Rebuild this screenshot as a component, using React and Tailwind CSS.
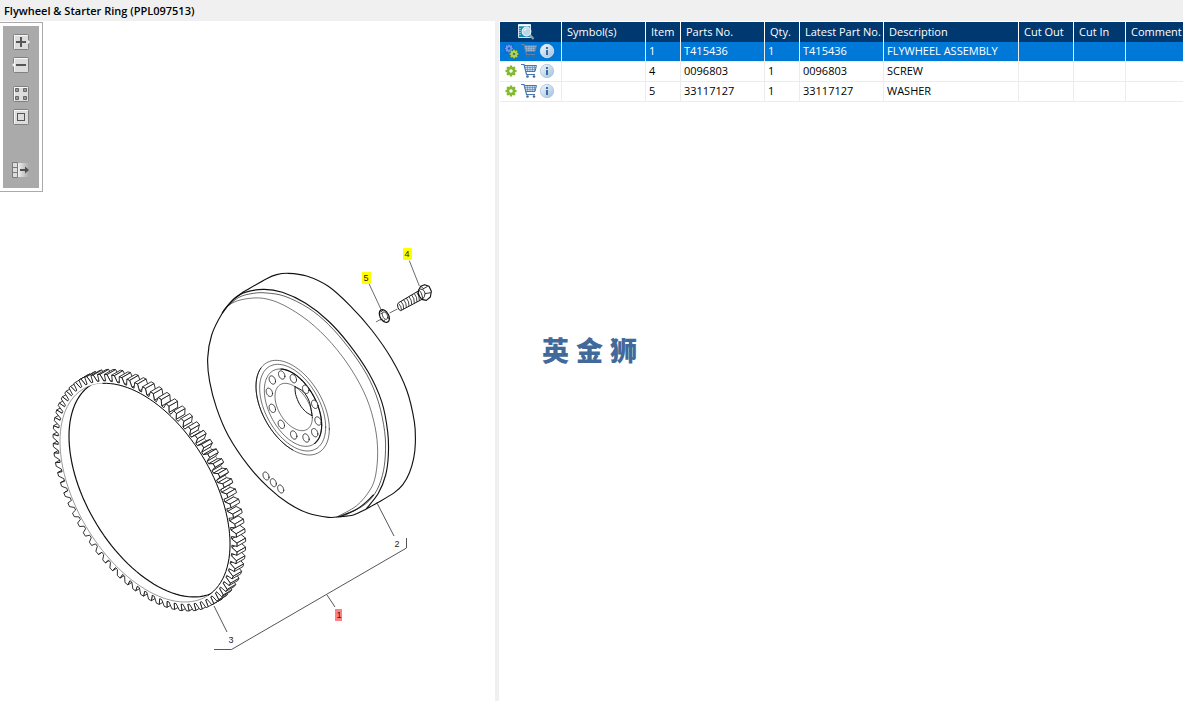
import React from "react";

/* ---------- geometry helpers for the exploded drawing ---------- */

// Point on a sheared ellipse: half extents a and b, skew k.
const pt = (cx, cy, a, b, k, t) => [cx + a * Math.cos(t), cy + b * Math.sin(t + Math.asin(k))];

const poly = (points, close = true) =>
  "M" + points.map((p) => p[0].toFixed(1) + " " + p[1].toFixed(1)).join("L") + (close ? "Z" : "");

const oval = (cx, cy, a, b, k = 0.45, from = 0, to = 360) => {
  const pts = [];
  for (let d = from; d <= to; d += 3) pts.push(pt(cx, cy, a, b, k, (d * Math.PI) / 180));
  return poly(pts, to - from >= 360);
};

// Catmull-Rom curve through a flat list of coordinates.
const curve = (...n) => {
  const p = [];
  for (let i = 0; i < n.length; i += 2) p.push([n[i], n[i + 1]]);
  let d = `M${p[0][0]} ${p[0][1]}`;
  for (let i = 0; i < p.length - 1; i++) {
    const a = p[i - 1] || p[i];
    const b = p[i];
    const c = p[i + 1];
    const e = p[i + 2] || c;
    d += `C${b[0] + (c[0] - a[0]) / 6} ${b[1] + (c[1] - a[1]) / 6} ${c[0] - (e[0] - b[0]) / 6} ${c[1] - (e[1] - b[1]) / 6} ${c[0]} ${c[1]}`;
  }
  return d;
};

const GEAR = { cx: 315, cy: 398, a: 255, b: 328, k: 0.47 };
const DEPTH = [26, -15];
const TEETH = 73;

const gearPoint = (scale, t) => pt(GEAR.cx, GEAR.cy, GEAR.a * scale, GEAR.b * scale, GEAR.k, t);

function buildGear() {
  const outline = [];
  const step = (Math.PI * 2) / TEETH;
  for (let i = 0; i < TEETH; i++) {
    const t = i * step;
    outline.push(gearPoint(1.022, t), gearPoint(1.022, t + step * 0.28));
    outline.push(gearPoint(1.082, t + step * 0.44), gearPoint(1.082, t + step * 0.8));
  }
  const sides = outline
    .map((p, i) => {
      const q = outline[(i + 1) % outline.length];
      const facing = (q[1] - p[1]) * DEPTH[0] - (q[0] - p[0]) * DEPTH[1];
      const order = (p[0] + q[0]) * DEPTH[0] + (p[1] + q[1]) * DEPTH[1];
      return {
        facing,
        order,
        root: i % 4 === 0,
        d: poly([p, q, [q[0] + DEPTH[0], q[1] + DEPTH[1]], [p[0] + DEPTH[0], p[1] + DEPTH[1]]]),
      };
    })
    .filter((s) => s.facing > 0)
    .sort((m, n) => m.order - n.order);
  return { outline: poly(outline), sides };
}

const gear = buildGear();

const BOLT_HOLES = [
  [232, 435], [260, 420], [295, 431], [332, 463], [359, 508], [369, 558],
  [359, 593], [333, 609], [296, 600], [259, 568], [232, 520], [223, 472],
];

function StarterRing() {
  return (
    <g transform="translate(40 360) scale(.33333)" fill="#fff" stroke="#111" strokeWidth="2.6" strokeLinejoin="round">
      {gear.sides.map((s, i) => (
        <path key={i} d={s.d} stroke={s.root ? "#777" : "#1a1a1a"} />
      ))}
      <path d={gear.outline} />
      <path d={oval(315, 398, 255, 328, 0.47)} stroke="#666" strokeWidth="2" />
      <clipPath id="ring-hole">
        <path d={oval(315, 398, 255, 328, 0.47)} />
      </clipPath>
      <path d={oval(342, 383, 255, 328, 0.47)} clipPath="url(#ring-hole)" strokeWidth="3.6" />
      <path d={oval(315, 398, 255, 328, 0.47, -120, 42)} fill="none" strokeWidth="3" />
    </g>
  );
}

function Flywheel() {
  return (
    <g transform="translate(195 235) scale(.33333)" fill="none" stroke="#111" strokeWidth="3.4" strokeLinecap="round">
      <path d={curve(145, 171, 215, 131, 245, 119, 280, 115, 335, 123, 400, 154, 465, 212, 530, 285, 590, 372, 635, 465, 658, 560, 661, 625, 656, 670, 643, 714, 624, 748, 598, 773, 545, 805)} />
      <path d={curve(145, 171, 112, 196, 80, 238, 50, 300, 38, 370, 44, 440, 65, 520, 100, 602, 160, 692, 220, 757, 280, 805, 340, 835, 400, 847, 435, 845, 475, 840, 510, 824, 545, 805)} />
      <path d={curve(82, 233, 108, 201, 145, 174, 205, 163, 262, 172, 332, 205, 400, 258, 460, 325, 520, 412, 560, 500, 578, 590, 580, 660, 572, 720, 550, 775, 515, 820)} />
      <path strokeWidth="2" d={curve(85, 226, 130, 188, 175, 175, 215, 174, 270, 184, 340, 219, 400, 268, 460, 337, 515, 418, 550, 500, 569, 590, 571, 660, 562, 722, 540, 775, 500, 815, 430, 845)} />
      <path strokeWidth="1.7" d={curve(85, 228, 110, 205, 150, 192, 205, 190, 265, 210, 340, 258, 410, 325, 470, 405, 515, 490, 540, 575, 548, 650, 542, 720, 525, 765, 485, 812, 425, 846)} />
      <path d={curve(435, 845, 480, 826, 515, 800, 535, 780)} />
      <g strokeWidth="1.8">
        <path d={oval(293, 518, 110, 142)} />
        <path d={oval(293, 518, 99, 130)} />
        <path d={oval(294, 518, 86, 116)} />
        <path d={oval(296, 516, 56, 71)} />
      </g>
      <path strokeWidth="2.6" d={oval(293, 518, 110, 142, 0.45, 90, 210)} />
      <path strokeWidth="3.4" d={oval(294, 518, 86, 116, 0.45, -115, 42)} />
      <path strokeWidth="3" d={curve(300, 455, 302, 478, 314, 508, 332, 530, 351, 542)} />
      <path strokeWidth="3" d={curve(300, 455, 325, 470, 343, 500, 351, 542)} />
      <g fill="#fff" strokeWidth="2.6">
        {BOLT_HOLES.map(([x, y]) => (
          <path key={x + "-" + y} d={oval(x, y, 9.5, 12.5, 0.3)} />
        ))}
        <path d={oval(213, 723, 9, 12, 0.3)} />
        <path d={oval(235, 743, 9, 12, 0.3)} />
        <path d={oval(257, 762, 9, 12, 0.3)} />
      </g>
    </g>
  );
}

function ScrewAndWasher() {
  return (
    <g transform="translate(350 240) scale(.33333)" fill="none" stroke="#111" strokeWidth="3" strokeLinejoin="round">
      <path strokeWidth="2.4" stroke="#444" d="M178 62 208 138M57 131 93 208M78 246 92 238M119 219 142 207" />
      <path d="M146 188 205 153M152 212 214 179M146 188Q140 192 144 203Q148 212 152 212" />
      <path strokeWidth="2.4" d="M153 184Q162 194 161 207M161 179Q170 189 169 203M169 174Q178 184 177 198M177 170Q186 180 185 194M185 165Q194 175 193 190M193 161Q202 171 201 186M200 157Q209 167 208 182M147 192Q155 200 154 210" />
      <path fill="#fff" strokeWidth="3.4" d="M206 150 212 139 224 134 237 139 244 154 241 171 229 181 215 178 209 170Q202 160 206 150Z" />
      <path strokeWidth="2.6" d="M210 147Q224 148 225 161Q225 171 217 178M225 161 242 158M219 147 233 139M206 150Q216 156 218 177M213 139 221 147" />
      <path strokeWidth="3.600" d={oval(103, 228, 15, 19, 0.4)} />
      <path strokeWidth="2.800" d={oval(105, 227, 8, 11, 0.4)} />
      <path strokeWidth="3" d="M91 216 99 211M91 223 96 218M97 237 91 240M103 239 101 246M112 232 119 236" />
    </g>
  );
}

const CALLOUTS = [
  { n: 4, x: 407, y: 254, fill: "#ffff00" },
  { n: 5, x: 366, y: 278, fill: "#ffff00" },
  { n: 1, x: 339, y: 615, fill: "#ff8080" },
  { n: 2, x: 397, y: 544 },
  { n: 3, x: 231, y: 640 },
];

function Diagram() {
  return (
    <svg className="block shrink-0" width="495" height="680" viewBox="0 21 495 680" role="img" aria-label="Flywheel and starter ring exploded view">
      <Flywheel />
      <StarterRing />
      <ScrewAndWasher />
      <path d="M377 503 394 536M214 606 227 632M214 649.500H231.500L406.500 548V538M327 595 335 607" fill="none" stroke="#555" strokeWidth="1" />
      {CALLOUTS.map((c) => (
        <g key={c.n}>
          {c.fill && <rect x={c.x - 4} y={c.y - 6} width={c.n === 1 ? 7 : 9} height="12" fill={c.fill} />}
          <text x={c.x} y={c.y + 3} textAnchor="middle" fill="#222" className="font-['Liberation_Sans',sans-serif] text-[9px]">
            {c.n}
          </text>
        </g>
      ))}
    </svg>
  );
}

/* ---------- toolbar ---------- */

const Tile = () => (
  <>
    <rect x=".5" y=".5" width="15" height="15" rx="1" fill="#dcdcdc" stroke="#808080" />
    <path d="M1.500 14.500V1.500H14.500" fill="none" stroke="#f8f8f8" />
  </>
);

const TOOLS = [
  {
    label: "Zoom in",
    art: (
      <>
        <Tile />
        <path d="M15 6 17 8 15 10Z" fill="#eee" />
        <path d="M3 8H13M8 3V13" stroke="#555" strokeWidth="2" />
      </>
    ),
  },
  {
    label: "Zoom out",
    art: (
      <>
        <Tile />
        <path d="M1 6-1 8 1 10Z" fill="#eee" />
        <path d="M3 8H13" stroke="#555" strokeWidth="2" />
      </>
    ),
  },
  {
    label: "Fit to window",
    gap: true,
    art: (
      <>
        <Tile />
        <path d="M2.500 2.500h3v3h-3zM10.500 2.500h3v3h-3zM2.500 10.500h3v3h-3zM10.500 10.500h3v3h-3z" fill="#999" stroke="#666" />
      </>
    ),
  },
  {
    label: "Actual size",
    art: (
      <>
        <Tile />
        <rect x="4.500" y="4.500" width="7" height="7" fill="#ddd" stroke="#555" />
      </>
    ),
  },
];

function Toolbar() {
  return (
    <div role="toolbar" aria-label="Drawing tools" className="absolute top-px left-0 border border-l-0 border-[#aaa] bg-white p-[3px]">
      <div className="flex w-9 flex-col items-center bg-[#aaa] pt-2 pb-2.5">
        {TOOLS.map((t) => (
          <button key={t.label} aria-label={t.label} className={t.gap ? "mt-[13px] size-4" : "mt-[7px] size-4 first:mt-0"}>
            <svg viewBox="0 0 16 16" className="block size-4 overflow-visible">
              {t.art}
            </svg>
          </button>
        ))}
        <button aria-label="Hide parts list" className="mt-[37px] size-4">
          <svg viewBox="0 0 16 16" className="block size-4 overflow-visible">
            <defs>
              <linearGradient id="fade">
                <stop offset="0" stopColor="#eee" />
                <stop offset="1" stopColor="#aaa" />
              </linearGradient>
            </defs>
            <rect x="5" y="1" width="11" height="14" fill="url(#fade)" />
            <path d="M-.5.500h5v15h-5zM-.5 5.500h5M-.5 10.500h5" fill="#ddd" stroke="#7a7a7a" />
            <path d="M5.500 1V15" stroke="#eee" />
            <path d="M7 7H12V4.500L16 8 12 11.500V9H7Z" fill="#505050" />
          </svg>
        </button>
      </div>
    </div>
  );
}

/* ---------- table icons ---------- */

const Teeth = ({ cx, cy, r, w, color, hole }) => (
  <g transform={`translate(${cx} ${cy})`}>
    {[0, 45, 90, 135].map((a) => (
      <rect key={a} x={-w / 2} y={-r} width={w} height={r * 2} transform={`rotate(${a})`} fill={color} />
    ))}
    <circle r={r * 0.76} fill={color} />
    <circle r={r * 0.32} fill={hole} />
  </g>
);

const GearIcon = () => (
  <svg viewBox="0 0 16 16" className="block size-4">
    <Teeth cx={8} cy={8} r={5.5} w={2.4} color="#84b92f" hole="#fff" />
  </svg>
);

const AssemblyIcon = () => (
  <svg viewBox="0 0 16 16" className="block size-4">
    <Teeth cx={6} cy={5.5} r={4.9} w={2.2} color="#1f4fb8" hole="#0078d7" />
    <Teeth cx={6} cy={5.5} r={4.1} w={1.5} color="#6f9cf0" hole="#0a5fc0" />
    <Teeth cx={11} cy={11} r={4.9} w={2.2} color="#5d8f2e" hole="#0078d7" />
    <Teeth cx={11} cy={11} r={4.1} w={1.6} color="#b2d84e" hole="#4c7f7a" />
  </svg>
);

const CartIcon = ({ active }) => (
  <svg viewBox="0 0 16 16" className="block size-4" fill="none" stroke={active ? "#6580a5" : "#4878ad"}>
    <path d="M3 2H15.500L14 8 4.500 9Z" fill={active ? "#9db7d3" : "#c9dcee"} stroke="none" />
    <path d="M0 1.500H3L5.500 11.500H14" strokeWidth="1.200" />
    <path d="M3.500 2.500H15.500L14 8.500H5" />
    <path d="M4 4.500H15M4.500 6.500H14.500M6.500 2.500V8.500M9 2.500V8.500M11.500 2.500V8.500M13.500 2.500V8" strokeWidth=".5" />
    <circle cx="6.500" cy="13.500" r="1.300" fill="#456a98" stroke="none" />
    <circle cx="13" cy="13.500" r="1.300" fill="#456a98" stroke="none" />
  </svg>
);

const InfoIcon = ({ active }) => (
  <svg viewBox="0 0 16 16" className="block size-4">
    <defs>
      <linearGradient id="orb" x2="1" y2="1">
        <stop offset="0" stopColor="#f4f8fb" />
        <stop offset="1" stopColor="#9fc0df" />
      </linearGradient>
    </defs>
    <circle cx="8" cy="8" r="6.700" fill="url(#orb)" stroke={active ? "#dceaf6" : "#a6c3de"} strokeWidth=".8" />
    <path d="M8 4V6M8 7V12" stroke="#3e6c9e" strokeWidth="2" />
  </svg>
);

const SearchIcon = () => (
  <svg viewBox="0 0 17 16" className="block h-4 w-[17px]">
    <path d="M.5.500H12.500V13.500H.5Z" fill="#1689b8" stroke="#d5e5ed" />
    <path d="M0 1.500H13" stroke="#fff" strokeWidth="1.500" />
    <path d="M2 4V12" stroke="#e8f4f8" strokeDasharray="1 1" />
    <circle cx="8.500" cy="7.500" r="4.300" fill="#b9d7e6" stroke="#e5edf2" strokeWidth="1.300" />
    <path d="M6 7Q6.500 5 8.500 5" fill="none" stroke="#fff" />
    <path d="M12 11 15.500 15" stroke="#87a6bd" strokeWidth="2" />
  </svg>
);

/* ---------- parts list ---------- */

const COLUMNS = [
  { name: "Symbol(s)", width: "w-[84px]" },
  { name: "Item", width: "w-[35px]" },
  { name: "Parts No.", width: "w-[84px]" },
  { name: "Qty.", width: "w-[35px]" },
  { name: "Latest Part No.", width: "w-[84px]" },
  { name: "Description", width: "w-[135px]" },
  { name: "Cut Out", width: "w-[55px]" },
  { name: "Cut In", width: "w-[52px]" },
  { name: "Comment", width: "" },
];

const ROWS = [
  { selected: true, cells: ["", "1", "T415436", "1", "T415436", "FLYWHEEL ASSEMBLY", "", "", ""] },
  { cells: ["", "4", "0096803", "1", "0096803", "SCREW", "", "", ""] },
  { cells: ["", "5", "33117127", "1", "33117127", "WASHER", "", "", ""] },
];

function PartsTable() {
  return (
    <table className="w-full table-fixed border-separate border-spacing-0 text-left text-[11px] leading-4">
      <thead>
        <tr className="h-5 bg-[#003870] text-white">
          <th className="w-[62px] border-r border-white p-0">
            <button aria-label="Search parts" className="ml-[18px] block">
              <SearchIcon />
            </button>
          </th>
          {COLUMNS.map((c) => (
            <th key={c.name} className={`${c.width} overflow-hidden border-r border-white py-0 pr-0 pl-[5px] font-normal whitespace-nowrap last:border-r-0`}>
              {c.name}
            </th>
          ))}
        </tr>
      </thead>
      <tbody>
        {ROWS.map((row) => (
          <tr key={row.cells[1]} className={row.selected ? "h-5 bg-[#0078d7] text-white" : "h-5 text-black"}>
            <td className="border-r border-b border-[#ececec] px-0 pt-0 pb-px">
              <div className="flex gap-0.5 pl-[3px]">
                <button aria-label="Part type">{row.selected ? <AssemblyIcon /> : <GearIcon />}</button>
                <button aria-label="Add to cart">
                  <CartIcon active={row.selected} />
                </button>
                <button aria-label="Part information">
                  <InfoIcon active={row.selected} />
                </button>
              </div>
            </td>
            {row.cells.map((text, i) => (
              <td key={COLUMNS[i].name} className="border-r border-b border-[#ececec] pt-0 pr-0 pb-0.5 pl-[3px] whitespace-nowrap last:border-r-0">
                {text}
              </td>
            ))}
          </tr>
        ))}
      </tbody>
    </table>
  );
}

export default function App() {
  return (
    <div className="flex min-h-screen flex-col bg-white font-['Open_Sans','Noto_Sans_CJK_SC',sans-serif] text-black">
      <header className="h-[21px] bg-[#f0f0f0] px-1">
        <h1 className="text-[11px] leading-[22px] font-semibold">Flywheel &amp; Starter Ring (PPL097513)</h1>
      </header>
      <main className="flex flex-1">
        <section className="relative shrink-0">
          <Diagram />
          <Toolbar />
        </section>
        <div className="w-1 shrink-0 bg-[#f0f0f0]" />
        <section className="min-w-0 flex-1 overflow-hidden pt-px pl-px">
          <PartsTable />
          <p className="mt-[229px] ml-[42px] flex gap-[7px] text-[27px] leading-10 font-black text-[#41699a]">
            <span>英</span>
            <span>金</span>
            <span>狮</span>
          </p>
        </section>
      </main>
    </div>
  );
}
